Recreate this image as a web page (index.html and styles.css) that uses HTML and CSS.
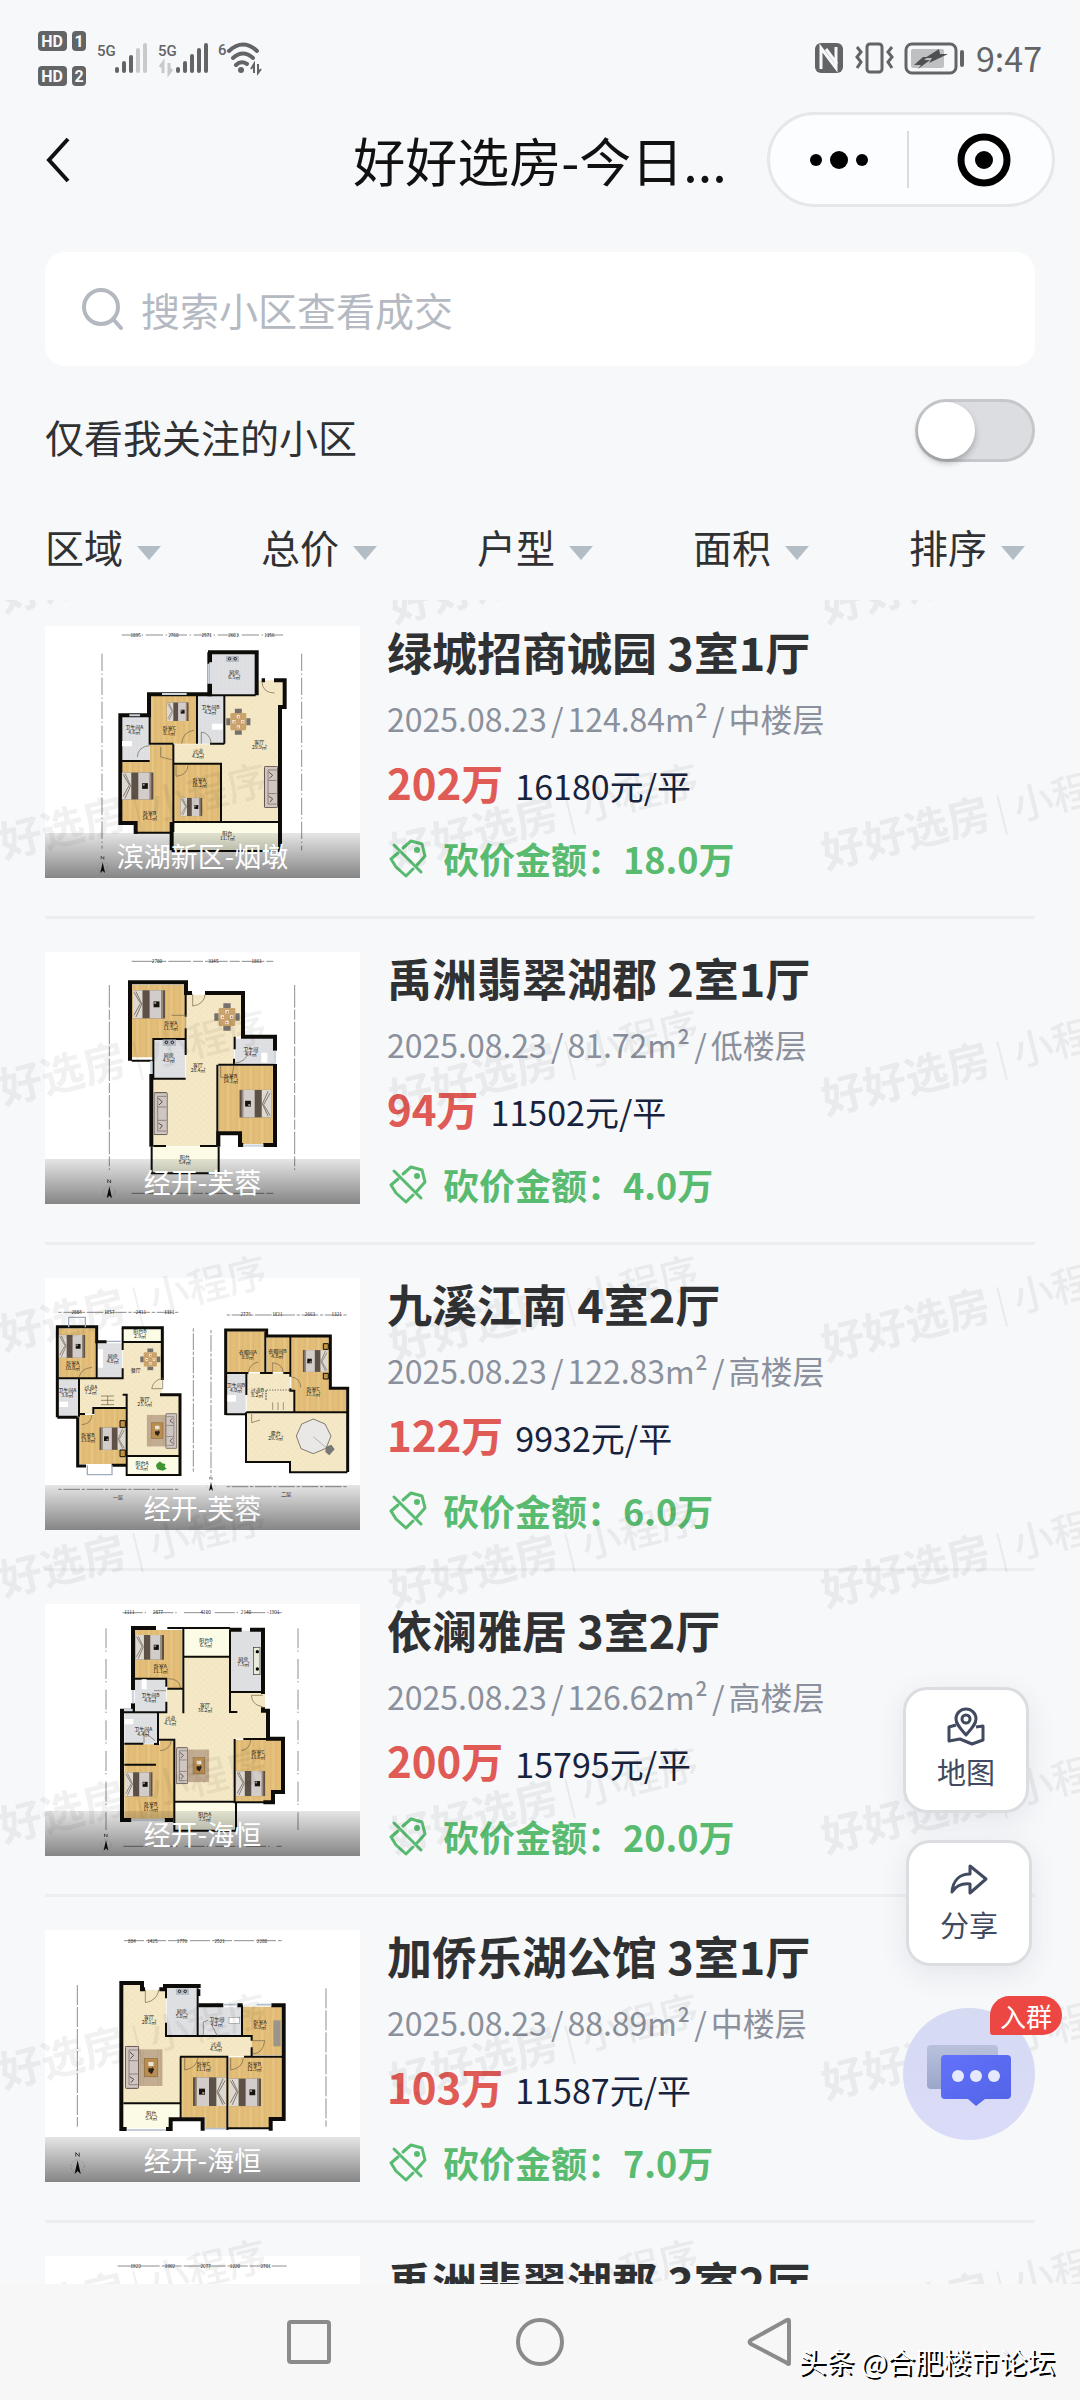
FILE: index.html
```html
<!DOCTYPE html>
<html lang="zh-CN">
<head>
<meta charset="utf-8">
<meta name="viewport" content="width=device-width">
<title>好好选房-今日成交</title>
<link rel="stylesheet" href="styles.css">
</head>
<body>
<svg class="defs" aria-hidden="true">
  <defs>
    <pattern id="wood" width="34" height="60" patternUnits="userSpaceOnUse">
      <rect width="34" height="60" fill="#e2be79"/>
      <path d="M8 0V60M25 0V60" stroke="#d9b26a" stroke-width="2"/>
      <path d="M16 0V60" stroke="#e9ca8b" stroke-width="3"/>
    </pattern>
    <pattern id="tile" width="18" height="18" patternUnits="userSpaceOnUse">
      <rect width="18" height="18" fill="#f4e8c6"/>
      <path d="M0 0L18 18M18 0L0 18" stroke="#eee0b8" stroke-width="1"/>
    </pattern>
    <pattern id="wet" width="12" height="12" patternUnits="userSpaceOnUse">
      <rect width="12" height="12" fill="#dfe0e2"/>
      <path d="M0 0H12M0 0V12" stroke="#d3d5d8" stroke-width="1"/>
    </pattern>
    <symbol id="bed" viewBox="0 0 100 86">
      <rect width="100" height="86" fill="#5d5047"/>
      <rect width="30" height="86" fill="#ddd8d0"/>
      <path d="M4 6L24 40L4 76M10 4L28 42L10 82" fill="none" stroke="#7d746b" stroke-width="3"/>
      <rect x="52" width="36" height="86" fill="#d2cdca"/>
      <rect x="64" y="34" width="18" height="18" fill="#17130f"/>
      <rect x="66" y="36" width="6" height="6" fill="#a39788"/>
      <rect x="88" width="5" height="86" fill="#9a8b7c"/>
    </symbol>
    <symbol id="sofa" viewBox="0 0 42 128">
      <rect x="1" y="1" width="40" height="126" rx="3" fill="#cfc6c2" stroke="#5a4b45" stroke-width="3"/>
      <path d="M12 12H38M12 44H38M12 84H38M12 116H38M12 12V116" stroke="#6f605a" stroke-width="2"/>
      <path d="M14 18L26 28L16 38M14 92L26 100L18 110" fill="none" stroke="#5a4b45" stroke-width="3"/>
    </symbol>
    <symbol id="dining" viewBox="0 0 78 86">
      <path d="M28 2H50V16H28ZM28 70H50V84H28ZM1 32H14V54H1ZM64 32H77V54H64Z" fill="#77716c"/>
      <rect x="14" y="16" width="50" height="54" rx="4" fill="#c9a36b"/>
      <path d="M34 22H44V32H34ZM34 54H44V64H34ZM20 38H30V48H20ZM48 38H58V48H48Z" fill="#f3ebdf"/>
      <path d="M38 26h4v4h-4zM36 58h4v4h-4zM24 42h4v4h-4zM51 41h4v4h-4z" fill="#c35b3b"/>
    </symbol>
    <symbol id="rug" viewBox="0 0 84 128">
      <rect width="84" height="128" fill="#c3ad92"/>
      <path d="M6 0V128M16 0V128M68 0V128M78 0V128" stroke="#b39c82" stroke-width="2"/>
      <rect x="20" y="32" width="46" height="64" fill="#b98c50" stroke="#866235" stroke-width="2"/>
      <path d="M34 44h18v14h-18z" fill="#ece4d5"/>
      <path d="M34 66h14v-6l6 10-8 16-12-8z" fill="#2c2219"/>
    </symbol>
    <symbol id="stove" viewBox="0 0 42 20">
      <rect width="42" height="20" fill="#b5bcc5"/>
      <circle cx="12" cy="9" r="4" fill="none" stroke="#222" stroke-width="3"/>
      <circle cx="30" cy="9" r="4" fill="none" stroke="#222" stroke-width="3"/>
    </symbol>
    <symbol id="compass" viewBox="0 0 40 64">
      <circle cx="20" cy="40" r="17" fill="none" stroke="#888" stroke-width="1" stroke-dasharray="4 5"/>
      <path d="M20 24L28 60L20 52L12 60Z" fill="#111"/>
      <path d="M15 14V4L24 14V4" fill="none" stroke="#222" stroke-width="2"/>
    </symbol>
    <symbol id="cut-tag" viewBox="0 0 40 40">
      <g fill="none" stroke="#58bb6f" stroke-width="3" stroke-linecap="round" stroke-linejoin="round">
        <path d="M16 10L24 3L35 6L38 18L30 27"/>
        <path d="M11 15L4 21L9 29L19 38L26 31"/>
        <path d="M7 7L34 34"/>
      </g>
      <circle cx="30" cy="12" r="3" fill="#58bb6f"/>
    </symbol>
  </defs>
</svg>

<div class="app">
  <div class="status">
    <svg class="status-left" width="226" height="64" viewBox="38 26 226 64" aria-hidden="true">
      <g fill="#636466">
        <rect x="38" y="31" width="29" height="20" rx="4"/><rect x="72" y="31" width="14" height="20" rx="4"/>
        <rect x="38" y="66" width="29" height="20" rx="4"/><rect x="72" y="66" width="14" height="20" rx="4"/>
      </g>
      <g class="badge-text" fill="#f7f8fa" text-anchor="middle">
        <text x="52" y="47">HD</text><text x="79" y="47">1</text>
        <text x="52" y="82">HD</text><text x="79" y="82">2</text>
      </g>
      <g class="net-text" fill="#636466"><text x="97" y="56">5G</text><text x="158" y="56">5G</text><text x="218" y="55">6</text></g>
      <g stroke="#636466" stroke-width="4" stroke-linecap="round">
        <path d="M117 69V71M124 63V71M131 57V71"/>
        <path d="M138 50V71M145 45V71" stroke="#c8c9cb"/>
        <path d="M178 69V71M185 63V71M192 56V71M199 50V71M206 45V71"/>
      </g>
      <path d="M163 73V63L160 67M169 63V73L172 69" fill="none" stroke="#c8c9cb" stroke-width="3"/>
      <g fill="none" stroke="#636466" stroke-width="4" stroke-linecap="round">
        <path d="M229 51Q243 38 257 51M233 58Q243 49 253 58M236 65Q241 60 247 64"/>
      </g>
      <circle cx="241" cy="70" r="3" fill="#636466"/>
      <path d="M254 73V64L251 69M258 64V73L261 69" fill="none" stroke="#636466" stroke-width="2"/>
    </svg>
    <div class="status-right">
      <svg width="152" height="64" viewBox="814 26 152 64" aria-hidden="true">
        <rect x="815" y="43" width="28" height="30" rx="6" fill="#636466"/>
        <path d="M821 69V48L836 68V47M826 49L837 64" fill="none" stroke="#f7f8fa" stroke-width="3"/>
        <rect x="867" y="44" width="15" height="28" rx="3" fill="none" stroke="#636466" stroke-width="3"/>
        <path d="M857 47L861 52L857 57L861 62L857 68M892 47L888 52L892 57L888 62L892 68" fill="none" stroke="#636466" stroke-width="3"/>
        <rect x="906" y="44" width="50" height="29" rx="6" fill="none" stroke="#636466" stroke-width="3"/>
        <rect x="911" y="49" width="33" height="19" rx="2" fill="#bfc0c2"/>
        <path d="M923 57L914 65H921L918 69L930 60H924L928 57ZM939 49L925 58H932L929 63L948 54H940Z" fill="#4f5052"/>
        <path d="M962 52V65" stroke="#636466" stroke-width="4" stroke-linecap="round"/>
      </svg>
      <span class="clock">9:47</span>
    </div>
  </div>

  <header class="titlebar">
    <button class="back" aria-label="返回"><svg width="26" height="48" viewBox="0 0 26 48"><path d="M23 3L4 24L23 45" fill="none" stroke="#111" stroke-width="4"/></svg></button>
    <h1>好好选房-今日...</h1>
    <div class="capsule">
      <button aria-label="更多"><svg width="60" height="24" viewBox="0 0 60 24"><circle cx="7" cy="12" r="6"/><circle cx="30" cy="12" r="9"/><circle cx="53" cy="12" r="6"/></svg></button>
      <button aria-label="关闭"><svg width="54" height="54" viewBox="0 0 54 54"><circle cx="27" cy="27" r="23" fill="none" stroke="#000" stroke-width="7"/><circle cx="27" cy="27" r="9"/></svg></button>
    </div>
  </header>

  <label class="search">
    <svg width="44" height="44" viewBox="0 0 44 44" aria-hidden="true"><g fill="none" stroke="#b4b9c1" stroke-width="4" stroke-linecap="round"><circle cx="20" cy="20" r="17"/><path d="M32 32L40 41"/></g></svg>
    <input type="search" placeholder="搜索小区查看成交" aria-label="搜索小区">
  </label>

  <div class="follow">
    <label for="follow">仅看我关注的小区</label>
    <input id="follow" class="switch" type="checkbox" role="switch">
  </div>

  <nav class="filters">
    <button>区域</button><button>总价</button><button>户型</button><button>面积</button><button>排序</button>
  </nav>

  <main class="feed">
    <article class="deal">
      <figure class="plan">
        <svg viewBox="135 77 945 756" role="img" aria-label="户型图">
          <g class="dim"><path d="M365 104H855M306 160V745M905 160V750" stroke-dasharray="52 8 4 8"/></g>
          <g class="dim-text"><text x="407" y="109">1895</text><text x="520" y="109">2760</text><text x="620" y="109">2571</text><text x="700" y="109">2603</text><text x="808" y="109">1356</text></g>
          <path d="M671 285H767V240H855V320H840V665H663V490H517V432H671Z" fill="url(#tile)"/>
          <path d="M447 285H591V430H447ZM359 482H449V434H518V697H403V668H359ZM520 490H663V665H520Z" fill="url(#wood)"/>
          <path d="M630 160H770V283H630ZM593 285H673V430H593ZM360 348H449V482H360Z" fill="url(#wet)"/>
          <path d="M517 667H840V752H517Z" fill="#fbfbe6"/>
          <path class="wall" d="M630 186V156H770V285M630 250V282H447V345H361V668H407V700M515 665V750M785 240H795M822 240H854V320H840V750"/>
          <path class="thin" d="M625 156V285H767M591 285V430M673 285V430M449 285V430H520M630 430H673M361 482H449M520 432V695M520 490H663V665M403 697H515M520 665H840M515 752H842M449 345V430"/>
          <path d="M486 281H560M388 345H420M625 190V250" stroke="#cdd5de" stroke-width="6"/>
          <use href="#bed" x="485" y="306" width="96" height="56" preserveAspectRatio="none"/>
          <use href="#bed" x="365" y="516" width="96" height="82"/>
          <use href="#bed" x="525" y="592" width="98" height="56" preserveAspectRatio="none"/>
          <use href="#dining" x="677" y="323" width="76" height="82"/>
          <use href="#sofa" x="791" y="497" width="44" height="126"/>
          <use href="#stove" x="677" y="166" width="40" height="20"/>
          <path d="M636 370h32v18h-32zM366 422h30v16h-30z" fill="#fff"/>
          <path class="door" d="M786 245Q788 278 824 278M545 430Q548 394 582 390M604 430V395Q630 398 634 430M412 470Q414 438 449 436M528 495V528Q562 525 564 495M482 440V470L515 478"/>
          <g class="room"><text x="703" y="220">厨房<tspan x="703" dy="15">6.5㎡</tspan></text><text x="631" y="325">卫生间B<tspan x="631" dy="15">4.2㎡</tspan></text><text x="403" y="385">卫生间A<tspan x="403" dy="15">4.6㎡</tspan></text><text x="508" y="390">卧室C<tspan x="508" dy="15">8.1㎡</tspan></text><text x="778" y="432">客厅<tspan x="778" dy="15">29.9㎡</tspan></text><text x="594" y="458">过道<tspan x="594" dy="15">4.2㎡</tspan></text><text x="598" y="546">卧室A<tspan x="598" dy="15">10.2㎡</tspan></text><text x="449" y="643">卧室B<tspan x="449" dy="15">14.1㎡</tspan></text><text x="682" y="705">阳台<tspan x="682" dy="15">11.7㎡</tspan></text></g>
          <use href="#compass" x="290" y="764" width="36" height="58"/>
        </svg>
        <figcaption>滨湖新区-烟墩</figcaption>
      </figure>
      <div class="info">
        <h2>绿城招商诚园 3室1厅</h2>
        <p class="meta"><span>2025.08.23</span><i>/</i><span>124.84m²</span><i>/</i><span>中楼层</span></p>
        <p class="price"><strong>202万</strong><span>16180元/平</span></p>
        <p class="cut"><svg width="40" height="40" aria-hidden="true"><use href="#cut-tag"/></svg>砍价金额：18.0万</p>
      </div>
    </article>

    <article class="deal">
      <figure class="plan">
        <svg viewBox="45 36 945 756" role="img" aria-label="户型图">
          <g class="dim"><path d="M305 64H730M238 135V690M794 135V690M305 760H730" stroke-dasharray="68 6 30 6"/></g>
          <g class="dim-text"><text x="381" y="69">2780</text><text x="550" y="69">3345</text><text x="680" y="69">1861</text></g>
          <path d="M468 165H635V290H612V372H562V618H370V416H467Z" fill="url(#tile)"/>
          <path d="M305 134H465V294H370V352H305ZM565 377H730V612H632V575H565Z" fill="url(#wood)"/>
          <path d="M370 297H465V415H370ZM615 296H732V370H615Z" fill="url(#wet)"/>
          <path d="M367 620H566V700H367Z" fill="#fbfbe6"/>
          <path class="wall" d="M300 362V127H468V159H486M525 159H639V290H735V332M735 372V615H700M640 615H630V580H565V620M364 402V620"/>
          <path class="thin" d="M467 130V230M467 265V297H370V362H305M370 297V416H467M467 297V345M614 290V328M565 374H735M562 374V618M612 372V356M370 618H408M510 618H562M365 620V700H566V620"/>
          <path d="M364 362V402M735 332V372M640 617H700" stroke="#cdd5de" stroke-width="7"/>
          <use href="#bed" x="308" y="149" width="98" height="88"/>
          <g transform="rotate(180 677 492)"><use href="#bed" x="630" y="449" width="96" height="88"/></g>
          <use href="#dining" x="551" y="188" width="80" height="86"/>
          <use href="#sofa" x="371" y="456" width="42" height="130"/>
          <use href="#stove" x="397" y="298" width="42" height="20"/>
          <rect x="694" y="338" width="18" height="30" fill="#fff"/>
          <path class="door" d="M488 162V198Q522 194 526 162M425 226H467V265M612 370Q650 366 655 335M572 378V412H605L612 376"/>
          <g class="room"><text x="422" y="256">卧室A<tspan x="422" dy="15">11.5㎡</tspan></text><text x="416" y="352">厨房<tspan x="416" dy="15">4.9㎡</tspan></text><text x="504" y="380">客厅<tspan x="504" dy="15">28.4㎡</tspan></text><text x="662" y="333">卫生间<tspan x="662" dy="15">4.4㎡</tspan></text><text x="602" y="414">卧室B<tspan x="602" dy="15">14.1㎡</tspan></text><text x="464" y="656">阳台<tspan x="464" dy="15">5.4㎡</tspan></text></g>
          <use href="#compass" x="218" y="715" width="40" height="64"/>
        </svg>
        <figcaption>经开-芙蓉</figcaption>
      </figure>
      <div class="info">
        <h2>禹洲翡翠湖郡 2室1厅</h2>
        <p class="meta"><span>2025.08.23</span><i>/</i><span>81.72m²</span><i>/</i><span>低楼层</span></p>
        <p class="price"><strong>94万</strong><span>11502元/平</span></p>
        <p class="cut"><svg width="40" height="40" aria-hidden="true"><use href="#cut-tag"/></svg>砍价金额：4.0万</p>
      </div>
    </article>

    <article class="deal">
      <figure class="plan">
        <svg viewBox="45 54 945 756" role="img" aria-label="户型图">
          <g class="dim"><path d="M85 157H450M590 165H950M490 205V640M543 210V650M85 688H450M590 680H950" stroke-dasharray="10 5 50 5"/></g>
          <g class="dim-text"><text x="140" y="161">2884</text><text x="238" y="161">1857</text><text x="333" y="161">2411</text><text x="418" y="161">1311</text><text x="647" y="168">2776</text><text x="742" y="168">1821</text><text x="840" y="168">2663</text><text x="920" y="168">1321</text></g>
          <path d="M278 248H395V405H448V588H290V440H190V462H150V357H278Z" fill="url(#tile)"/>
          <path d="M85 205H197V355H85ZM145 465H193V447H287V612H145Z" fill="url(#wood)"/>
          <path d="M202 250H276V354H202ZM85 358H147V468H85Z" fill="url(#wet)"/>
          <path d="M276 206H395V246H276ZM290 590H448V645H290Z" fill="#fbfbe6"/>
          <path class="wall mid" d="M82 472V200H200V245H230M275 203H397V360M390 404H450V648M143 472V618H168M245 616H288M82 472H143"/>
          <path class="thin" d="M200 245V355M85 355H278V325M278 205V270M278 246H395M278 404H290V645H450M190 462V444H290M147 357V470M290 588H448M147 462H165"/>
          <path d="M116 202V172H166V202M172 616V644H246V616M230 244H272" fill="none" stroke="#9eacbd" stroke-width="4"/>
          <use href="#bed" x="86" y="224" width="80" height="70"/>
          <g transform="rotate(180 247 536)"><use href="#bed" x="208" y="501" width="78" height="70"/></g>
          <use href="#dining" x="328" y="264" width="66" height="68"/>
          <use href="#rug" x="350" y="458" width="62" height="108" preserveAspectRatio="none"/>
          <g transform="rotate(180 425 512)"><use href="#sofa" x="408" y="458" width="36" height="106"/></g>
          <path d="M270 482h16v20h-16zM270 570h16v20h-16z" fill="#c49442" stroke="#111" stroke-width="3"/>
          <path d="M213 408H252M213 421H252M213 434H252M233 408V434" stroke="#6b5c42" stroke-width="2"/>
          <path d="M204 268h15v55h-15zM88 425h26v16h-26z" fill="#fff"/>
          <path d="M380 612l10-8 6 6 10 2-2 8 6 6-12 6-16-4-4-10z" fill="#3d9634"/>
          <path class="door" d="M148 350Q152 326 186 322M365 386H398V355Q370 360 365 386M155 494Q184 492 186 465"/>
          <path d="M650 340H780V390H792V458H948V636H780V604H650Z" fill="url(#tile)"/>
          <path d="M590 214H705V336H590ZM710 232H778V336H710ZM784 228H900V388H948V457H794V390H784Z" fill="url(#wood)"/>
          <path d="M590 342H647V462H590Z" fill="url(#wet)"/>
          <path class="wall mid" d="M587 465V210H710V228H901V385H953V636"/>
          <path class="thin" d="M587 339H655M690 339H728M706 215V339M781 228V350M781 385V392H793V457M649 340V405M649 457H952M648 457V606H780V637H952M587 463H648M760 339H780"/>
          <path d="M708 420V390H788M708 390V422" fill="none" stroke="#333" stroke-width="2" stroke-dasharray="4 4"/>
          <path d="M728 427V450M744 427V450M760 427V450" stroke="#7b6b4e" stroke-width="2"/>
          <g transform="rotate(180 856 303)"><use href="#bed" x="818" y="268" width="76" height="70"/></g>
          <path d="M880 251h15v17h-15zM880 340h15v17h-15z" fill="#c49442" stroke="#111" stroke-width="3"/>
          <path d="M850 477L885 492L903 528L888 565L850 581L813 566L799 528L815 492Z" fill="#e9e8e7" stroke="#4c463d" stroke-width="2"/>
          <path d="M850 530L896 570" stroke="#999" stroke-width="2"/><path d="M888 560l16-6 10 14-16 18-12-10z" fill="#777"/>
          <rect x="592" y="405" width="26" height="20" fill="#fff"/>
          <path class="door" d="M655 338Q660 310 685 306M728 338V308Q758 312 760 338M784 350Q812 356 812 382M665 462V488L690 480"/>
          <g class="room"><text x="128" y="315">卧室A<tspan x="128" dy="15">10.0㎡</tspan></text><text x="248" y="294">厨房<tspan x="248" dy="15">4.8㎡</tspan></text><text x="330" y="220">阳台B<tspan x="330" dy="15">2.9㎡</tspan></text><text x="317" y="337">餐厅</text><text x="112" y="395">卫生间A<tspan x="112" dy="15">3.6㎡</tspan></text><text x="182" y="387">过道A<tspan x="182" dy="15">7.2㎡</tspan></text><text x="344" y="423">客厅<tspan x="344" dy="15">23.5㎡</tspan></text><text x="174" y="531">卧室B<tspan x="174" dy="15">13.0㎡</tspan></text><text x="336" y="614">阳台A<tspan x="336" dy="15">4.8㎡</tspan></text><text x="653" y="281">衣帽间A<tspan x="653" dy="15">8.9㎡</tspan></text><text x="742" y="280">衣帽间B<tspan x="742" dy="15">4.8㎡</tspan></text><text x="618" y="380">卫生间B<tspan x="618" dy="15">4.0㎡</tspan></text><text x="682" y="397">过道B<tspan x="682" dy="15">8.2㎡</tspan></text><text x="849" y="392">卧室C<tspan x="849" dy="15">17.1㎡</tspan></text><text x="737" y="525">露台<tspan x="737" dy="15">29.5㎡</tspan></text><text x="264" y="718">一层</text><text x="769" y="708">二层</text></g>
          <use href="#compass" x="528" y="648" width="30" height="48"/>
        </svg>
        <figcaption>经开-芙蓉</figcaption>
      </figure>
      <div class="info">
        <h2>九溪江南 4室2厅</h2>
        <p class="meta"><span>2025.08.23</span><i>/</i><span>122.83m²</span><i>/</i><span>高楼层</span></p>
        <p class="price"><strong>122万</strong><span>9932元/平</span></p>
        <p class="cut"><svg width="40" height="40" aria-hidden="true"><use href="#cut-tag"/></svg>砍价金额：6.0万</p>
      </div>
    </article>

    <article class="deal">
      <figure class="plan">
        <svg viewBox="45 42 945 756" role="img" aria-label="户型图">
          <g class="dim"><path d="M278 68H755M280 769H755M228 115V720M804 115V720" stroke-dasharray="60 6 4 22"/></g>
          <g class="dim-text"><text x="298" y="72">1111</text><text x="384" y="72">2877</text><text x="527" y="72">4100</text><text x="648" y="72">2140</text><text x="733" y="72">1901</text></g>
          <path d="M460 200H600V308H705V360H712V446H614V635H435V450H385V368H410V297H460Z" fill="url(#tile)"/>
          <path d="M315 120H457V295H412V264H315ZM283 463H390V452H432V688H283ZM616 450H754V600H726V635H616Z" fill="url(#wood)"/>
          <path d="M602 122H694V303H602ZM315 268H408V364H315ZM283 369H383V461H283Z" fill="url(#wet)"/>
          <path d="M462 118H598V198H462ZM436 637H614V722H436Z" fill="#fbfbe6"/>
          <path class="wall" d="M309 300V114H378M598 119H635M660 119H699V312M699 352V362H714V446H759V606H729V637H700M309 340V362H276V690H304M404 690H430"/>
          <path class="thin" d="M412 114H600M460 114V370M462 200H598M600 120V366H622M602 306H698M315 266H409V290M409 335V367H276M412 296H460M384 369V462H372M283 461H340M283 524H378M385 449H433V725M614 447V637H725M640 447H712M436 635H614M436 722H618V637"/>
          <path d="M309 300V340M282 360H308M304 690H404" stroke="#cdd5de" stroke-width="7"/>
          <use href="#bed" x="316" y="134" width="86" height="76"/>
          <use href="#bed" x="284" y="545" width="84" height="76"/>
          <use href="#bed" x="618" y="543" width="88" height="76"/>
          <use href="#rug" x="474" y="471" width="64" height="113" preserveAspectRatio="none"/>
          <use href="#sofa" x="438" y="471" width="36" height="112"/>
          <path d="M335 268h15v30h-15zM284 387h26v16h-26z" fill="#fff"/>
          <rect x="670" y="172" width="20" height="82" fill="#e9ecd8" stroke="#333" stroke-width="2"/>
          <circle cx="682" cy="185" r="5"/><circle cx="682" cy="237" r="5"/>
          <path class="door" d="M416 266Q448 266 452 295M372 302H408M342 460V425L375 452M390 482Q420 480 424 452M664 316Q666 346 698 350M634 482Q660 478 662 450M664 316H698"/>
          <g class="room"><text x="391" y="234">卧室A<tspan x="391" dy="15">11.1㎡</tspan></text><text x="528" y="156">阳台B<tspan x="528" dy="15">6.5㎡</tspan></text><text x="640" y="212">厨房<tspan x="640" dy="15">7.5㎡</tspan></text><text x="361" y="322">卫生间B<tspan x="361" dy="15">4.6㎡</tspan></text><text x="525" y="350">客厅<tspan x="525" dy="15">38.2㎡</tspan></text><text x="421" y="390">过道<tspan x="421" dy="15">4.1㎡</tspan></text><text x="340" y="424">卫生间A<tspan x="340" dy="15">4.4㎡</tspan></text><text x="684" y="493">卧室C<tspan x="684" dy="15">11.6㎡</tspan></text><text x="362" y="649">卧室B<tspan x="362" dy="15">17.5㎡</tspan></text><text x="524" y="677">阳台A<tspan x="524" dy="15">7.5㎡</tspan></text></g>
          <use href="#compass" x="210" y="728" width="36" height="58"/>
        </svg>
        <figcaption>经开-海恒</figcaption>
      </figure>
      <div class="info">
        <h2>依澜雅居 3室2厅</h2>
        <p class="meta"><span>2025.08.23</span><i>/</i><span>126.62m²</span><i>/</i><span>高楼层</span></p>
        <p class="price"><strong>200万</strong><span>15795元/平</span></p>
        <p class="cut"><svg width="40" height="40" aria-hidden="true"><use href="#cut-tag"/></svg>砍价金额：20.0万</p>
      </div>
    </article>

    <article class="deal">
      <figure class="plan">
        <svg viewBox="45 60 945 756" role="img" aria-label="户型图">
          <g class="dim"><path d="M282 92H755M142 225V650M888 235V650" stroke-dasharray="60 6"/></g>
          <g class="dim-text"><text x="306" y="98">884</text><text x="367" y="98">1425</text><text x="456" y="98">1776</text><text x="569" y="98">2521</text><text x="696" y="98">2280</text></g>
          <path d="M280 225H330V240H408V380H665V438H450V578H280Z" fill="url(#tile)"/>
          <path d="M638 290H754V436H665V380H638ZM456 442H590V655H525V622H456ZM595 442H754V622H718V655H595Z" fill="url(#wood)"/>
          <path d="M410 233H503V376H410ZM508 292H634V376H508Z" fill="url(#wet)"/>
          <path d="M282 582H450V622H417V655H282Z" fill="#fbfbe6"/>
          <path class="wall" d="M290 657H274V219H336V238H345M388 238H405V228H512M505 286H580M622 286H638M724 286H761V627H722V662M518 662V628H422V657H408"/>
          <path class="thin" d="M408 228V265M408 338V378H665V392M503 235V378M636 286V378M665 412V440M450 440H592V660M642 440H758M452 440V625M280 580H450M592 655H720M508 238V258"/>
          <path d="M580 284H622M680 284H724M292 660H408M525 656H588" stroke="#b4bfcb" stroke-width="5"/>
          <use href="#rug" x="326" y="407" width="72" height="132" preserveAspectRatio="none"/>
          <use href="#sofa" x="285" y="407" width="42" height="130"/>
          <g transform="rotate(180 539 545)"><use href="#bed" x="489" y="501" width="100" height="88"/></g>
          <use href="#bed" x="597" y="503" width="96" height="88"/>
          <use href="#stove" x="437" y="234" width="40" height="22"/>
          <rect x="597" y="322" width="32" height="18" fill="#fff" stroke="#999" stroke-width="2"/>
          <rect x="730" y="331" width="22" height="78" fill="#9b9589"/>
          <path class="door" d="M346 238V278Q382 272 387 238M520 376V336L535 330M562 378L545 345M668 392H704Q700 430 668 432M464 444V480Q500 474 504 444M602 444V480Q638 474 640 444"/>
          <g class="room"><text x="357" y="326">客厅<tspan x="357" dy="15">20.1㎡</tspan></text><text x="455" y="309">厨房<tspan x="455" dy="15">5.0㎡</tspan></text><text x="560" y="332">卫生间<tspan x="560" dy="15">4.2㎡</tspan></text><text x="690" y="341">卧室A<tspan x="690" dy="15">6.9㎡</tspan></text><text x="558" y="407">过道<tspan x="558" dy="15">4.5㎡</tspan></text><text x="520" y="467">卧室C<tspan x="520" dy="15">11.1㎡</tspan></text><text x="673" y="467">卧室B<tspan x="673" dy="15">12.5㎡</tspan></text><text x="364" y="616">阳台<tspan x="364" dy="15">5.4㎡</tspan></text></g>
          <use href="#compass" x="120" y="723" width="46" height="74"/>
        </svg>
        <figcaption>经开-海恒</figcaption>
      </figure>
      <div class="info">
        <h2>加侨乐湖公馆 3室1厅</h2>
        <p class="meta"><span>2025.08.23</span><i>/</i><span>88.89m²</span><i>/</i><span>中楼层</span></p>
        <p class="price"><strong>103万</strong><span>11587元/平</span></p>
        <p class="cut"><svg width="40" height="40" aria-hidden="true"><use href="#cut-tag"/></svg>砍价金额：7.0万</p>
      </div>
    </article>

    <article class="deal">
      <figure class="plan">
        <svg viewBox="0 0 945 756" role="img" aria-label="户型图">
          <g class="dim"><path d="M218 30H725" stroke-dasharray="60 6"/></g>
          <g class="dim-text"><text x="272" y="36">1920</text><text x="375" y="36">1902</text><text x="482" y="36">2077</text><text x="570" y="36">1220</text><text x="662" y="36">2701</text></g>
        </svg>
      </figure>
      <div class="info">
        <h2>禹洲翡翠湖郡 3室2厅</h2>
      </div>
    </article>

    <svg class="stamp" aria-hidden="true">
      <defs>
        <pattern id="stamp" x="-62" y="140" width="432" height="246" patternUnits="userSpaceOnUse">
          <g transform="translate(24 129) rotate(-14)" fill="#000" fill-opacity=".055">
            <text class="stamp-bold" x="0" y="0">好好选房</text>
            <rect x="183" y="-30" width="2" height="40"/>
            <text class="stamp-thin" x="197" y="0">小程序</text>
          </g>
        </pattern>
      </defs>
      <rect width="100%" height="100%" fill="url(#stamp)"/>
    </svg>
  </main>

  <footer class="sysnav">
    <button aria-label="最近任务"><svg width="50" height="50" viewBox="0 0 50 50"><rect x="5" y="5" width="40" height="40" rx="2"/></svg></button>
    <button aria-label="主屏幕"><svg width="50" height="50" viewBox="0 0 50 50"><circle cx="25" cy="25" r="22"/></svg></button>
    <button aria-label="返回上一页"><svg width="50" height="50" viewBox="0 0 50 50"><path d="M43 4V46Q43 48 41 46L5 27Q2 25 5 23L41 3Q43 2 43 4Z"/></svg></button>
  </footer>

  <div class="floats">
    <button class="float-btn">
      <svg width="40" height="40" viewBox="0 0 40 40"><g fill="none" stroke="#414a60" stroke-width="3" stroke-linejoin="round"><path d="M20 28C14 21 10 17 10 12A10 10 0 0 1 30 12C30 17 26 21 20 28Z"/><circle cx="20" cy="12" r="4"/><path d="M10 18L3 20V34L14 32L26 37L37 33V19L30 20"/></g></svg>
      地图
    </button>
    <button class="float-btn share">
      <svg width="40" height="40" viewBox="0 0 40 40"><path d="M21 6L37 19L21 33V24C12 23 7 26 3 32C4 20 11 14 21 14Z" fill="none" stroke="#414a60" stroke-width="3" stroke-linejoin="round"/></svg>
      分享
    </button>
    <button class="chat" aria-label="加入群聊">
      <svg width="132" height="132" viewBox="0 0 132 132">
        <defs>
          <linearGradient id="halo" x1="0" y1="0" x2="0" y2="1"><stop offset="0" stop-color="#d6daf3"/><stop offset="1" stop-color="#dadbf8"/></linearGradient>
          <linearGradient id="bubble" x1="0" y1="0" x2="1" y2="1"><stop offset="0" stop-color="#6273fb"/><stop offset="1" stop-color="#5263e6"/></linearGradient>
          <linearGradient id="shade" x1="0" y1="0" x2="0" y2="1"><stop offset="0" stop-color="#b9c1dc"/><stop offset="1" stop-color="#9ba6cb"/></linearGradient>
        </defs>
        <circle cx="66" cy="66" r="66" fill="url(#halo)"/>
        <rect x="24" y="37" width="71" height="44" rx="4" fill="url(#shade)"/>
        <path d="M42 47H104Q108 47 108 51V87Q108 91 104 91H82L73 98L65 91H42Q38 91 38 87V51Q38 47 42 47Z" fill="url(#bubble)"/>
        <g fill="#e6e9fb"><circle cx="55" cy="68" r="6"/><circle cx="73" cy="68" r="6"/><circle cx="91" cy="68" r="6"/></g>
      </svg>
      <span class="badge">入群</span>
    </button>
  </div>
  <p class="credit">头条 @合肥楼市论坛</p>
</div>
</body>
</html>
```
FILE: styles.css
```css
* {
  box-sizing: border-box;
}

body {
  margin: 0;
  background: #f7f8fa;
  color: #303133;
  font-family: "Noto Sans CJK SC", "Noto Sans", sans-serif;
}

h1, h2, p, figure {
  margin: 0;
}

button {
  padding: 0;
  border: 0;
  background: none;
  color: inherit;
  font: inherit;
}

svg {
  display: block;
}

.defs {
  position: absolute;
  width: 0;
  height: 0;
}

.app {
  position: relative;
  display: flex;
  flex-direction: column;
  height: 100vh;
  overflow: hidden;
}

/* status bar */
.status {
  display: flex;
  justify-content: space-between;
  padding: 26px 38px 0;
  color: #636466;
}

.status-right {
  display: flex;
  align-items: center;
  gap: 10px;
}

.badge-text {
  font: bold 16px Roboto, sans-serif;
}

.net-text {
  font: 500 15px Roboto, sans-serif;
}

.clock {
  font-size: 34px;
  line-height: 64px;
}

/* title bar */
.titlebar {
  display: grid;
  grid-template-columns: 1fr auto 1fr;
  align-items: center;
  padding: 22px 25px 0;
}

.back {
  justify-self: start;
  margin-left: 20px;
}

h1 {
  color: #111;
  font-size: 52px;
  font-weight: 400;
  line-height: 60px;
}

.capsule {
  display: flex;
  align-items: center;
  justify-self: end;
  width: 288px;
  height: 95px;
  border: 3px solid #e6e7e8;
  border-radius: 48px;
  background: #fcfdfe;
}

.capsule button {
  display: flex;
  flex: 1;
  align-items: center;
  justify-content: center;
  height: 57px;
}

.capsule button + button {
  padding-left: 6px;
  border-left: 2px solid #dcdcdd;
}

/* search */
.search {
  display: flex;
  align-items: center;
  gap: 16px;
  height: 114px;
  margin: 45px 45px 0;
  padding: 0 36px;
  border-radius: 20px;
  background: #fff;
}

.search input {
  flex: 1;
  min-width: 0;
  height: 60px;
  padding: 0;
  border: 0;
  outline: 0;
  background: none;
  color: #303133;
  font: 39px "Noto Sans CJK SC", sans-serif;
}

.search input::placeholder {
  color: #b5bac2;
  opacity: 1;
}

/* followed-only switch */
.follow {
  display: flex;
  align-items: center;
  justify-content: space-between;
  margin: 33px 45px 0;
  font-size: 39px;
  line-height: 50px;
}

.follow label {
  padding-top: 10px;
}

.switch {
  appearance: none;
  width: 120px;
  height: 63px;
  margin: 0;
  border: 3px solid #c6c7ca;
  border-radius: 32px;
  background: #dcdde1;
}

.switch::before {
  content: "";
  display: block;
  width: 57px;
  height: 57px;
  border-radius: 50%;
  background: #fff;
  box-shadow: 0 4px 6px rgba(0, 0, 0, .25);
}

.switch:checked::before {
  margin-left: auto;
}

/* filters */
.filters {
  display: grid;
  grid-template-columns: repeat(5, 1fr);
  height: 102px;
  margin-top: 36px;
}

.filters button {
  display: flex;
  align-items: center;
  justify-content: center;
  gap: 14px;
  padding: 0 10px 6px 0;
  font-size: 39px;
}

.filters button::after {
  content: "";
  margin-top: 14px;
  border: 12px solid transparent;
  border-top: 14px solid #b3bdc5;
  border-bottom: 0;
}

/* deals */
.feed {
  position: relative;
  flex: 1;
  min-height: 0;
  padding: 26px 45px 0;
  overflow: hidden;
}

.deal {
  display: grid;
  grid-template-columns: 315px 1fr;
  gap: 27px;
  margin-bottom: 33px;
  padding-bottom: 38px;
  border-bottom: 3px solid #edeef1;
}

.plan {
  position: relative;
  height: 252px;
  background: #fff;
}

.plan svg {
  width: 100%;
  height: 100%;
}

.plan figcaption {
  position: absolute;
  inset: auto 0 0;
  background: linear-gradient(rgba(0, 0, 0, .1), rgba(0, 0, 0, .48));
  color: #fff;
  font-size: 27px;
  line-height: 45px;
  text-align: center;
}

.wall {
  fill: none;
  stroke: #0e0c09;
  stroke-width: 12;
}

.wall.mid {
  stroke-width: 9;
}

.thin {
  fill: none;
  stroke: #0e0c09;
  stroke-width: 6;
}

.door {
  fill: none;
  stroke: #6f6248;
  stroke-width: 2;
}

.dim {
  fill: none;
  stroke: #555;
  stroke-width: 2;
}

.dim-text {
  fill: #222;
  font-size: 14px;
  text-anchor: middle;
}

.room {
  fill: #1a1712;
  font-size: 15px;
  text-anchor: middle;
}

.info {
  height: 252px;
}

.info h2 {
  font-size: 45px;
  font-weight: 700;
  line-height: 52px;
  white-space: nowrap;
}

.meta {
  display: flex;
  gap: 4px;
  margin-top: 20px;
  color: #8a909c;
  font-size: 32px;
  line-height: 40px;
}

.meta i {
  font-style: normal;
}

.price {
  display: flex;
  align-items: baseline;
  gap: 12px;
  height: 48px;
  margin-top: 20px;
  color: #17233d;
  font-size: 34px;
  line-height: 48px;
}

.price strong {
  color: #e05a56;
  font-size: 42px;
}

.cut {
  display: flex;
  align-items: center;
  gap: 16px;
  margin-top: 34px;
  color: #58bb6f;
  font-size: 36px;
  font-weight: 700;
  line-height: 36px;
}

.cut svg {
  margin: -2px 0;
}

.stamp {
  position: absolute;
  inset: 0;
  width: 100%;
  height: 100%;
  pointer-events: none;
}

.stamp-bold {
  font-size: 43px;
  font-weight: 700;
}

.stamp-thin {
  font-size: 40px;
  font-weight: 500;
}

/* system navigation */
.sysnav {
  display: flex;
  justify-content: center;
  gap: 181px;
  height: 116px;
  background: #f7f7f7;
}

.sysnav svg {
  fill: none;
  stroke: #8b8b8b;
  stroke-width: 4;
}

/* floating actions */
.floats {
  position: absolute;
  right: 45px;
  bottom: 260px;
  display: flex;
  flex-direction: column;
  align-items: flex-start;
  gap: 27px;
}

.float-btn {
  display: flex;
  flex-direction: column;
  align-items: center;
  justify-content: center;
  gap: 4px;
  width: 126px;
  height: 126px;
  padding-bottom: 3px;
  border: 3px solid #dcdde0;
  border-radius: 24px;
  background: #fff;
  box-shadow: 0 8px 28px rgba(60, 70, 100, .1);
  color: #414a60;
  font-size: 29px;
  line-height: 40px;
}

.share {
  margin-left: 3px;
}

.chat {
  position: relative;
  margin-top: 15px;
}

.badge {
  position: absolute;
  top: -12px;
  right: -27px;
  width: 72px;
  border-radius: 20px 20px 20px 3px;
  background: #ec4743;
  color: #fff;
  font-size: 26px;
  line-height: 39px;
  text-align: center;
}

.credit {
  position: absolute;
  right: 25px;
  bottom: 19px;
  color: #fff;
  font-size: 28px;
  line-height: 40px;
  text-shadow: 2px 2px 0 #000;
}
```
